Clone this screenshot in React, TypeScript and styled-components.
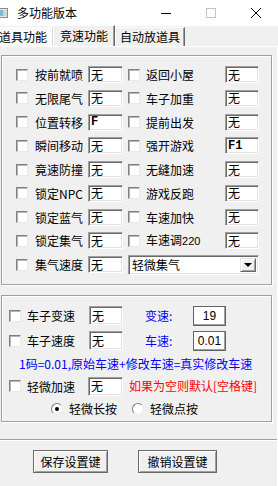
import React from "react";
import styled, { createGlobalStyle } from "styled-components";

const FONT = `"Noto Sans CJK SC", "Noto Sans", sans-serif`;

const GlobalStyle = createGlobalStyle`
  html, body { margin: 0; padding: 0; background: #f0f0f0; }
  body { width: 278px; height: 486px; overflow: hidden; }
  * { box-sizing: border-box; }
`;

const Window = styled.div`
  width: 278px;
  height: 486px;
  background: #f0f0f0;
  font-family: ${FONT};
  font-size: 12px;
  color: #000;
  overflow: hidden;
  display: flex;
  flex-direction: column;
`;

const TitleBar = styled.div`
  height: 26px;
  flex-shrink: 0;
  background: #fff;
  display: flex;
  align-items: center;
`;

const AppIcon = styled.svg`
  width: 8px;
  height: 10px;
  margin-right: 9px;
  flex-shrink: 0;
`;

const Title = styled.div`
  flex: 1;
  line-height: 16px;
`;

const WinButton = styled.div`
  width: 45px;
  height: 26px;
  display: flex;
  align-items: center;
  justify-content: center;
`;

const TabStrip = styled.div`
  height: 21px;
  flex-shrink: 0;
  display: flex;
  align-items: flex-end;
  margin-left: -6px;
  border-bottom: 1px solid #fff;
`;

const Tab = styled.div<{ $w: number; $active?: boolean; $first?: boolean }>`
  width: ${(p) => p.$w}px;
  height: ${(p) => (p.$active ? 21 : 19)}px;
  display: flex;
  align-items: center;
  justify-content: center;
  line-height: 16px;
  white-space: nowrap;
  background: ${(p) => (p.$first ? "#fbfbfb" : "#f0f0f0")};
  border-top: 1px solid #fff;
  border-left: ${(p) => (p.$first ? "none" : "1px solid #fff")};
  border-right: ${(p) => (p.$first ? "1px solid #dadada" : "1px solid #696969")};
  box-shadow: ${(p) => (p.$first ? "none" : "inset -1px 0 0 #a0a0a0")};
`;

const Page = styled.div`
  flex: 1;
  display: flex;
  flex-direction: column;
  border-right: 1px solid #fff;
`;

const GroupBox = styled.div<{ $h: number; $top: number }>`
  margin: ${(p) => p.$top}px 0 0 1px;
  width: 271px;
  height: ${(p) => p.$h}px;
  border: 1px solid #a0a0a0;
  box-shadow: 1px 1px 0 #fff, inset 1px 1px 0 #fff;
`;

const KeyGrid = styled.div`
  padding: 10px 0 0 14px;
  display: grid;
  grid-template-columns: 12px 60px 40px 12px 85px 34px;
  grid-auto-rows: 17px;
  row-gap: 6.75px;
  align-items: center;
`;

const CheckBox = styled.div`
  width: 12px;
  height: 12px;
  background: #fff;
  border: 1px solid;
  border-color: #808080 #e8e8e8 #e8e8e8 #808080;
  box-shadow: inset 1px 1px 0 #b4b4b4;
  flex-shrink: 0;
`;

const Label = styled.div<{ $pad?: number; $w?: number }>`
  padding-left: ${(p) => p.$pad ?? 7}px;
  ${(p) => (p.$w ? `width: ${p.$w}px; flex-shrink: 0;` : "")}
  line-height: 17px;
  white-space: nowrap;
`;

const Small = styled.span`
  font-family: "Liberation Sans", sans-serif;
  font-size: 11px;
`;

const TextBox = styled.div<{ $w?: number; $h?: number; $mono?: boolean }>`
  width: ${(p) => p.$w ?? 35}px;
  height: ${(p) => p.$h ?? 17}px;
  flex-shrink: 0;
  background: #fff;
  border: 1px solid;
  border-color: #a0a0a0 #fff #fff #a0a0a0;
  box-shadow: inset 1px 1px 0 #696969, inset -1px -1px 0 #e3e3e3;
  padding-left: 2px;
  display: flex;
  align-items: center;
  line-height: 14px;
  overflow: hidden;
  white-space: nowrap;
  font-family: ${(p) => (p.$mono ? `"Liberation Mono", monospace` : FONT)};
  font-weight: ${(p) => (p.$mono ? 700 : 400)};
  font-size: 12px;
`;

const Select = styled.div`
  grid-column: 4 / 7;
  height: 20px;
  background: #fff;
  border: 1px solid;
  border-color: #a0a0a0 #fff #fff #a0a0a0;
  box-shadow: inset 1px 1px 0 #696969, inset -1px -1px 0 #e3e3e3;
  display: flex;
  align-items: center;
  padding: 0 2px 0 3px;
  line-height: 16px;
`;

const SelectText = styled.div`
  flex: 1;
`;

const ArrowButton = styled.div`
  width: 16px;
  height: 14px;
  background: #f0f0f0;
  border: 1px solid;
  border-color: #e3e3e3 #696969 #696969 #e3e3e3;
  box-shadow: inset 1px 1px 0 #fff, inset -1px -1px 0 #a0a0a0;
  display: flex;
  align-items: center;
  justify-content: center;
`;

const Arrow = styled.div`
  width: 0;
  height: 0;
  border-left: 4px solid transparent;
  border-right: 4px solid transparent;
  border-top: 4px solid #000;
  margin-top: 1px;
`;

const SpeedBody = styled.div`
  padding: 9px 0 0 7px;
  display: flex;
  flex-direction: column;
`;

const Row = styled.div<{ $h: number; $gap?: number; $pad?: number }>`
  height: ${(p) => p.$h}px;
  margin-top: ${(p) => p.$gap ?? 0}px;
  padding-left: ${(p) => p.$pad ?? 0}px;
  display: flex;
  align-items: center;
`;

const BlueLabel = styled.div<{ $w?: number; $ml?: number }>`
  color: #0000ff;
  margin-left: ${(p) => p.$ml ?? 0}px;
  ${(p) => (p.$w ? `width: ${p.$w}px; flex-shrink: 0;` : "")}
  line-height: 14px;
  white-space: nowrap;
`;

const RedNote = styled.div`
  color: #ff0000;
  margin-left: 6px;
  line-height: 14px;
  white-space: nowrap;
`;

const ValueBox = styled.div`
  width: 33px;
  height: 20px;
  background: #fff;
  border: 1px solid #646464;
  box-shadow: inset -1px -1px 0 #a0a0a0;
  display: flex;
  align-items: center;
  justify-content: center;
  font-family: "Liberation Sans", sans-serif;
  font-size: 12px;
`;

const Radio = styled.div<{ $on?: boolean }>`
  width: 12px;
  height: 12px;
  border-radius: 50%;
  background: #fff;
  border: 1px solid;
  border-color: #808080 #e8e8e8 #e8e8e8 #808080;
  display: flex;
  align-items: center;
  justify-content: center;
  flex-shrink: 0;
  &::after {
    content: "";
    display: ${(p) => (p.$on ? "block" : "none")};
    width: 4px;
    height: 4px;
    border-radius: 50%;
    background: #000;
  }
`;

const Separator = styled.div`
  margin-top: 17px;
  height: 2px;
  border-top: 1px solid #a0a0a0;
  border-bottom: 1px solid #fff;
`;

const ButtonRow = styled.div`
  margin-top: 9px;
  padding-left: 33px;
  display: flex;
  gap: 30px;
`;

const PushButton = styled.div<{ $w: number }>`
  width: ${(p) => p.$w}px;
  height: 23px;
  background: #f0f0f0;
  border: 1px solid #696969;
  box-shadow: inset 1px 1px 0 #fff, inset -1px -1px 0 #a0a0a0;
  display: flex;
  align-items: center;
  justify-content: center;
  line-height: 16px;
`;

type KeyItem = { label: React.ReactNode; value: string; mono?: boolean };

const leftKeys: KeyItem[] = [
  { label: "按前就喷", value: "无" },
  { label: "无限尾气", value: "无" },
  { label: "位置转移", value: "F", mono: true },
  { label: "瞬间移动", value: "无" },
  { label: "竟速防撞", value: "无" },
  { label: "锁定NPC", value: "无" },
  { label: "锁定蓝气", value: "无" },
  { label: "锁定集气", value: "无" },
  { label: "集气速度", value: "无" },
];

const rightKeys: KeyItem[] = [
  { label: "返回小屋", value: "无" },
  { label: "车子加重", value: "无" },
  { label: "提前出发", value: "无" },
  { label: "强开游戏", value: "F1", mono: true },
  { label: "无缝加速", value: "无" },
  { label: "游戏反跑", value: "无" },
  { label: "车速加快", value: "无" },
  { label: (<>车速调<Small>220</Small></>), value: "无" },
];

export default function App() {
  return (
    <Window>
      <GlobalStyle />
      <TitleBar>
        <AppIcon viewBox="0 0 8 10">
          <rect x="-4" y="0.5" width="11.5" height="9" fill="#e8e8e8" stroke="#8a8a8a" />
          <rect x="-3" y="2" width="3" height="6" fill="#3f9e6a" />
          <rect x="0" y="2" width="3" height="6" fill="#7bb8d9" />
          <rect x="3" y="2" width="3.5" height="6" fill="#c9d8c0" />
        </AppIcon>
        <Title>多功能版本</Title>
        <WinButton>
          <svg width="10" height="10" viewBox="0 0 10 10">
            <line x1="0" y1="5.5" x2="10" y2="5.5" stroke="#000" strokeWidth="1" />
          </svg>
        </WinButton>
        <WinButton>
          <svg width="10" height="10" viewBox="0 0 10 10">
            <rect x="0.5" y="0.5" width="9" height="9" fill="none" stroke="#c4c4c4" strokeWidth="1" />
          </svg>
        </WinButton>
        <WinButton>
          <svg width="10" height="10" viewBox="0 0 10 10">
            <path d="M0 0 L10 10 M10 0 L0 10" stroke="#000" strokeWidth="1" />
          </svg>
        </WinButton>
      </TitleBar>

      <TabStrip>
        <Tab $w={59} $first>道具功能</Tab>
        <Tab $w={62} $active>竞速功能</Tab>
        <Tab $w={70}>自动放道具</Tab>
      </TabStrip>

      <Page>
        <GroupBox $top={8} $h={230}>
          <KeyGrid>
            {leftKeys.map((l, i) => (
              <React.Fragment key={i}>
                <CheckBox />
                <Label>{l.label}</Label>
                <TextBox $mono={l.mono}>{l.value}</TextBox>
                {i < rightKeys.length ? (
                  <>
                    <CheckBox />
                    <Label $pad={6}>{rightKeys[i].label}</Label>
                    <TextBox $w={34} $mono={rightKeys[i].mono}>{rightKeys[i].value}</TextBox>
                  </>
                ) : (
                  <Select>
                    <SelectText>轻微集气</SelectText>
                    <ArrowButton>
                      <Arrow />
                    </ArrowButton>
                  </Select>
                )}
              </React.Fragment>
            ))}
          </KeyGrid>
        </GroupBox>

        <GroupBox $top={10} $h={127}>
          <SpeedBody>
            <Row $h={21}>
              <CheckBox />
              <Label $pad={6} $w={68}>车子变速</Label>
              <TextBox $w={34} $h={19}>无</TextBox>
              <BlueLabel $ml={22} $w={48}>变速:</BlueLabel>
              <ValueBox>19</ValueBox>
            </Row>
            <Row $h={21} $gap={4}>
              <CheckBox />
              <Label $pad={6} $w={68}>车子速度</Label>
              <TextBox $w={34} $h={19}>无</TextBox>
              <BlueLabel $ml={22} $w={48}>车速:</BlueLabel>
              <ValueBox>0.01</ValueBox>
            </Row>
            <Row $h={14} $gap={6} $pad={10}>
              <BlueLabel>1码=0.01,原始车速+修改车速=真实修改车速</BlueLabel>
            </Row>
            <Row $h={20} $gap={5}>
              <CheckBox />
              <Label $pad={6} $w={67}>轻微加速</Label>
              <TextBox $w={35} $h={19}>无</TextBox>
              <RedNote>如果为空则默认[空格键]</RedNote>
            </Row>
            <Row $h={15} $gap={5} $pad={42}>
              <Radio $on />
              <Label $pad={6} $w={69}>轻微长按</Label>
              <Radio />
              <Label $pad={6}>轻微点按</Label>
            </Row>
          </SpeedBody>
        </GroupBox>

        <Separator />

        <ButtonRow>
          <PushButton $w={75}>保存设置键</PushButton>
          <PushButton $w={79}>撤销设置键</PushButton>
        </ButtonRow>
      </Page>
    </Window>
  );
}
